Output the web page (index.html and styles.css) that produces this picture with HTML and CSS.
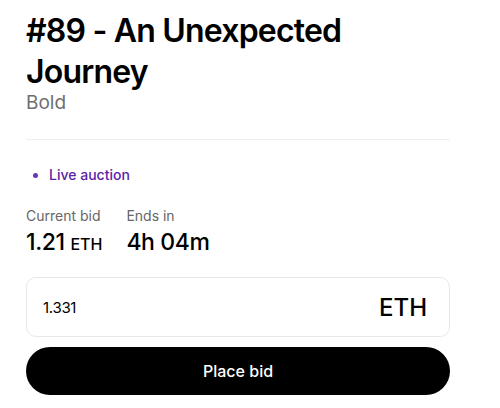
FILE: index.html
```html
<!DOCTYPE html>
<html>
<head>
<meta charset="utf-8">
<link rel="stylesheet" href="styles.css">
</head>
<body>
<main class="panel">
  <header class="head">
    <h1 class="title">#89 - An Unexpected Journey</h1>
    <div class="artist">Bold</div>
  </header>
  <hr class="divider">
  <div class="status"><span class="dot"></span>Live auction</div>
  <div class="stats">
    <div class="stat">
      <div class="label">Current bid</div>
      <div class="value">1.21 <span class="unit">ETH</span></div>
    </div>
    <div class="stat">
      <div class="label">Ends in</div>
      <div class="value">4h 04m</div>
    </div>
  </div>
  <div class="bid-input">
    <span class="amount">1.331</span>
    <span class="currency">ETH</span>
  </div>
  <button class="bid-btn">Place bid</button>
</main>
</body>
</html>
```
FILE: styles.css
```css
* { box-sizing: border-box; }
html, body { margin: 0; padding: 0; background: #fff; }
body { font-family: Inter, "Noto Sans", sans-serif; color: #000; }
.panel { width: 424px; margin-left: 26px; padding-top: 10px; display: flex; flex-direction: column; }
.title { margin: 0; font-size: 32px; line-height: 41px; font-weight: 600; letter-spacing: -0.8px; color: #000; width: 340px; }
.artist { font-size: 19px; line-height: 22px; color: #6f6f6f; font-weight: 400; }
.divider { border: 0; border-top: 1px solid #eeeeee; margin: 25px 0 0; height: 0; }
.status { margin-top: 25px; display: flex; align-items: center; font-size: 14px; line-height: 20px; font-weight: 500; color: #5b22a6; }
.dot { width: 5px; height: 5px; border-radius: 50%; background: #6a35b8; margin: 0 11px 0 7px; }
.stats { margin-top: 21px; display: flex; gap: 24px; }
.label { font-size: 14px; line-height: 20px; color: #666; }
.value { margin-top: 2px; font-size: 23px; line-height: 28px; font-weight: 500; letter-spacing: -0.4px; color: #000; }
.unit { font-size: 16px; letter-spacing: 0; }
.bid-input { margin-top: 19px; height: 60px; border: 1px solid #e8e8e8; border-radius: 10px; display: flex; align-items: center; justify-content: space-between; padding: 0 22px 0 16px; }
.amount { font-size: 15px; color: #000; letter-spacing: -0.3px; }
.currency { font-size: 24px; font-weight: 500; color: #000; }
.bid-btn { margin-top: 10px; height: 48px; width: 100%; border: 0; border-radius: 24px; background: #000; color: #fff; font-family: Inter, "Noto Sans", sans-serif; font-size: 16px; font-weight: 500; }
```
